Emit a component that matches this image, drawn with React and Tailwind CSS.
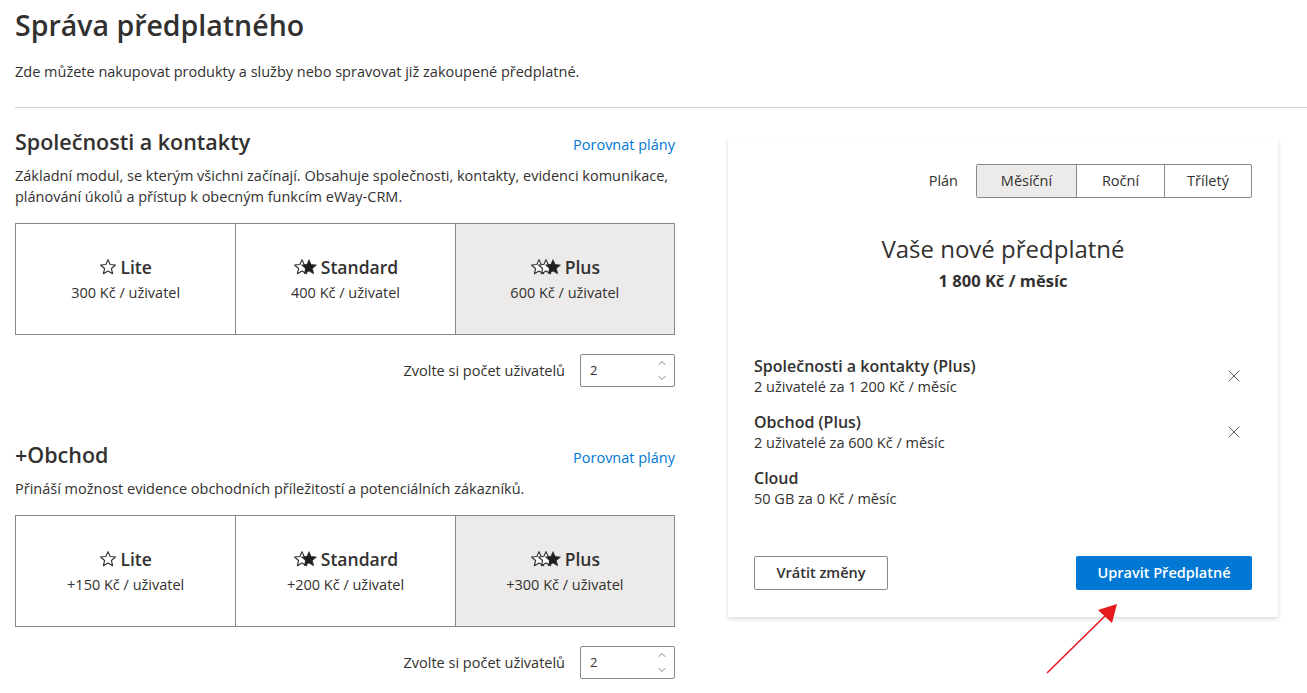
import { ChevronUp, ChevronDown, X } from 'lucide-react';

const STAR = 'M12 2.2l2.85 6.55 7.1.62-5.4 4.68 1.62 6.95L12 17.3l-6.17 3.7 1.62-6.95-5.4-4.68 7.1-.62z';

const Stars = ({ count }) => {
  const w = 18 + (count - 1) * 7;
  return (
    <svg width={w} height="18" viewBox={`0 0 ${w} 18`} className="shrink-0">
      {Array.from({ length: count }).map((_, i) => {
        const filled = count > 1 && i === count - 1;
        return (
          <g key={i} transform={`translate(${i * 7} 0) scale(0.75)`}>
            <path
              d={STAR}
              fill={filled ? '#201f1e' : '#ffffff'}
              stroke="#323130"
              strokeWidth={filled ? 1 : 1.5}
              strokeLinejoin="round"
            />
          </g>
        );
      })}
    </svg>
  );
};

const tiersA = [
  { name: 'Lite', stars: 1, price: '300 Kč / uživatel' },
  { name: 'Standard', stars: 2, price: '400 Kč / uživatel' },
  { name: 'Plus', stars: 3, price: '600 Kč / uživatel', active: true },
];

const tiersB = [
  { name: 'Lite', stars: 1, price: '+150 Kč / uživatel' },
  { name: 'Standard', stars: 2, price: '+200 Kč / uživatel' },
  { name: 'Plus', stars: 3, price: '+300 Kč / uživatel', active: true },
];

const Tiers = ({ tiers }) => (
  <div className="grid grid-cols-3 border border-[#8a8886] h-[112px]">
    {tiers.map((t, i) => (
      <div
        key={t.name}
        className={
          'flex flex-col items-center justify-center ' +
          (i > 0 ? 'border-l border-[#8a8886] ' : '') +
          (t.active ? 'bg-[#edebe9]' : 'bg-white')
        }
      >
        <div className="flex items-center gap-[3px] text-[17.5px] leading-[24px] font-semibold text-[#323130]">
          <Stars count={t.stars} />
          <span>{t.name}</span>
        </div>
        <div className="text-[14.5px] leading-[20px] mt-[4px] text-[#323130]">{t.price}</div>
      </div>
    ))}
  </div>
);

const UserCount = () => (
  <div className="flex items-center justify-end gap-[15px]">
    <span className="text-[14.5px] text-[#323130]">Zvolte si počet uživatelů</span>
    <div className="w-[95px] h-[33px] border border-[#8a8886] rounded-[2px] flex items-center justify-between pl-[9px] pr-[6px]">
      <span className="text-[13px] text-[#323130]">2</span>
      <div className="flex flex-col text-[#605e5c]">
        <ChevronUp size={12} strokeWidth={1.6} />
        <ChevronDown size={12} strokeWidth={1.6} className="mt-[3px]" />
      </div>
    </div>
  </div>
);

const Section = ({ title, desc, tiers, gap }) => (
  <div>
    <div className="flex items-baseline justify-between">
      <h2 className="text-[21.5px] leading-[28px] font-semibold text-[#323130]">{title}</h2>
      <a className="text-[14.5px] text-[#0078d4]">Porovnat plány</a>
    </div>
    <p className={'text-[14.5px] leading-[21px] text-[#323130] ' + gap}>{desc}</p>
    <div className="mt-[16px]">
      <Tiers tiers={tiers} />
    </div>
    <div className="mt-[19px]">
      <UserCount />
    </div>
  </div>
);

const Item = ({ title, sub, removable }) => (
  <div className="flex items-center justify-between">
    <div>
      <div className="text-[16px] leading-[22px] font-semibold text-[#323130]">{title}</div>
      <div className="text-[14.5px] leading-[20px] text-[#323130]">{sub}</div>
    </div>
    {removable && <X size={20} strokeWidth={1.2} className="text-[#605e5c] mr-[8px]" />}
  </div>
);

export default function App() {
  return (
    <div className="relative min-h-[693px] bg-white pl-[15px] font-['Open_Sans',sans-serif] text-[#323130]">
      <h1 className="pt-[6px] text-[28.5px] leading-[38px] font-semibold">Správa předplatného</h1>
      <p className="mt-[18px] text-[14.5px] leading-[20px]">
        Zde můžete nakupovat produkty a služby nebo spravovat již zakoupené předplatné.
      </p>
      <hr className="mt-[25px] border-0 border-t border-[#d2d0ce]" />

      <div className="flex items-start">
        <div className="w-[660px] pt-[20px]">
          <Section
            title="Společnosti a kontakty"
            desc="Základní modul, se kterým všichni začínají. Obsahuje společnosti, kontakty, evidenci komunikace, plánování úkolů a přístup k obecným funkcím eWay-CRM."
            tiers={tiersA}
            gap="mt-[9px]"
          />
          <div className="mt-[54px]">
            <Section
              title="+Obchod"
              desc="Přináší možnost evidence obchodních příležitostí a potenciálních zákazníků."
              tiers={tiersB}
              gap="mt-[9px]"
            />
          </div>
        </div>

        <div className="ml-[53px] mt-[30px] w-[550px] bg-white px-[26px] pt-[26px] pb-[27px] shadow-[0_1.6px_4px_rgba(0,0,0,0.14),0_0.3px_1px_rgba(0,0,0,0.1)]">
          <div className="flex items-center justify-end gap-[18px]">
            <span className="text-[14.5px]">Plán</span>
            <div className="flex h-[34px] border border-[#8a8886] rounded-[2px] text-[14.5px]">
              <div className="w-[99px] flex items-center justify-center bg-[#edebe9]">Měsíční</div>
              <div className="w-[88px] flex items-center justify-center border-l border-[#8a8886]">Roční</div>
              <div className="w-[87px] flex items-center justify-center border-l border-[#8a8886]">Tříletý</div>
            </div>
          </div>

          <div className="mt-[35px] text-center">
            <div className="text-[24px] leading-[32px]">Vaše nové předplatné</div>
            <div className="mt-[5px] text-[16.5px] leading-[22px] font-bold">1 800 Kč / měsíc</div>
          </div>

          <div className="mt-[63px] flex flex-col gap-[14px]">
            <Item title="Společnosti a kontakty (Plus)" sub="2 uživatelé za 1 200 Kč / měsíc" removable />
            <Item title="Obchod (Plus)" sub="2 uživatelé za 600 Kč / měsíc" removable />
            <Item title="Cloud" sub="50 GB za 0 Kč / měsíc" />
          </div>

          <div className="mt-[47px] flex items-center justify-between">
            <button className="w-[134px] h-[34px] border border-[#8a8886] rounded-[2px] bg-white text-[14.5px] font-semibold text-[#323130]">
              Vrátit změny
            </button>
            <button className="w-[176px] h-[34px] rounded-[2px] bg-[#0078d4] text-[14.5px] font-semibold text-white">
              Upravit Předplatné
            </button>
          </div>
        </div>
      </div>

      <svg className="absolute left-[1040px] top-[598px]" width="90" height="85" viewBox="0 0 90 85">
        <line x1="7" y1="75" x2="66" y2="17" stroke="#e8191c" strokeWidth="1.6" />
        <path d="M77 6 L72 25 L58 12 Z" fill="#e8191c" />
      </svg>
    </div>
  );
}
